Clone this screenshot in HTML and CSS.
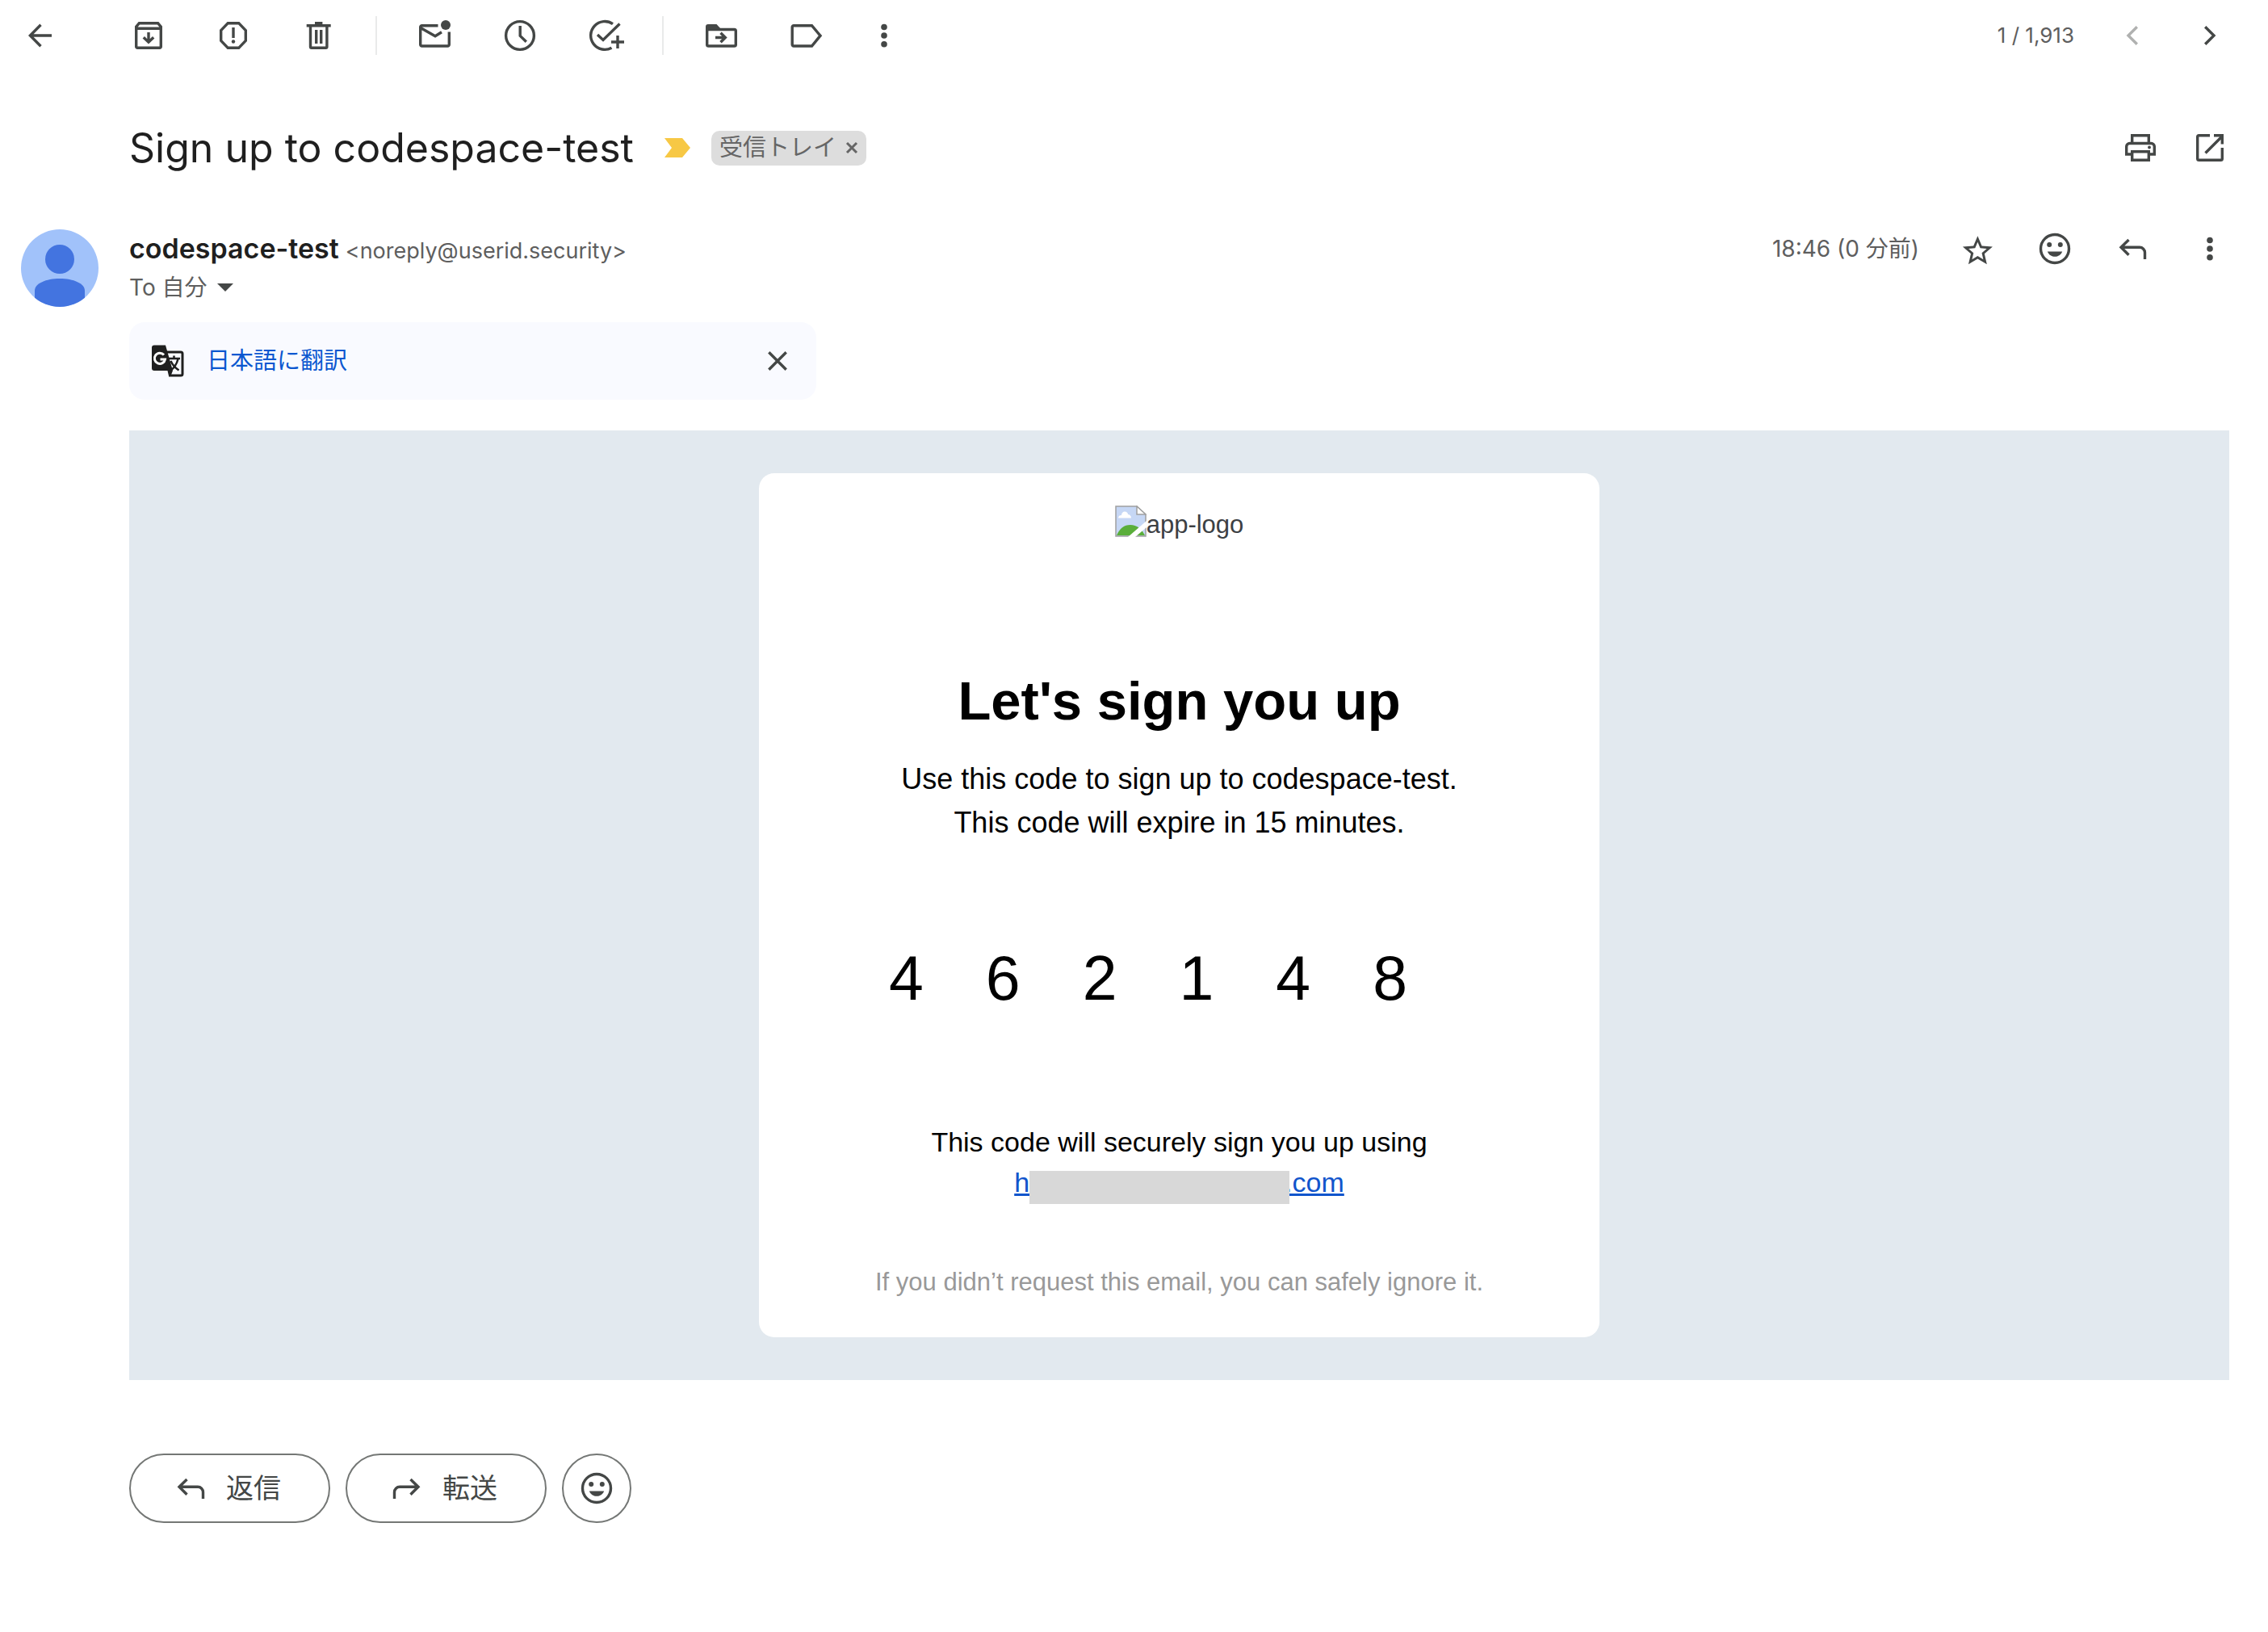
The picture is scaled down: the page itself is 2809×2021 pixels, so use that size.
FILE: index.html
```html
<!DOCTYPE html>
<html lang="ja">
<head>
<meta charset="utf-8">
<meta name="viewport" content="width=device-width, initial-scale=1">
<title>Sign up to codespace-test</title>
<link rel="stylesheet" href="styles.css">
</head>
<body>
<svg class="sprite" aria-hidden="true">
  <symbol id="i-back" viewBox="0 0 48 48"><path d="M38 24H12M24.5 10.8 11.4 24l13.1 13.2"/></symbol>
  <symbol id="i-archive" viewBox="0 0 48 48"><path d="M8.7 13.2 12.4 8.7h23.2l3.7 4.5v24.6a1.5 1.5 0 0 1-1.5 1.5H10.200a1.500 1.500 0 0 1-1.500-1.500zM8.700 15.300h30.600M24 20v12M17.800 26.200 24 32.200l6.200-6"/></symbol>
  <symbol id="i-spam" viewBox="0 0 48 48"><path d="M17.300 8.700h13.400l8.600 9v12.600l-8.600 9H17.300l-8.600-9V17.700zM24 14v13"/><circle class="fill" cx="24" cy="31.500" r="2.200"/></symbol>
  <symbol id="i-trash" viewBox="0 0 48 48"><path d="M9.700 11.700h30M20 8.700h9.400M14.500 12v26a1.300 1.300 0 0 0 1.300 1.300h17.800A1.300 1.300 0 0 0 34.900 38V12M21.700 17v17M27.700 17v17"/></symbol>
  <symbol id="i-unread" viewBox="0 0 48 48"><path d="M27.500 11.700H7.500a1.800 1.800 0 0 0-1.800 1.800v21.700A1.800 1.800 0 0 0 7.500 37h32a1.800 1.800 0 0 0 1.800-1.800V19.500M6 14.500l18 10.200 8-5"/><circle class="fill" cx="37" cy="11" r="6"/></symbol>
  <symbol id="i-clock" viewBox="0 0 48 48"><circle cx="24" cy="24" r="17.400"/><path d="M24.200 12v12.400l7.600 7.300"/></symbol>
  <symbol id="i-task" viewBox="0 0 48 48"><path d="M34 9.700A17.400 17.400 0 1 0 32.500 39.200M15 23l7 6.500L42.500 9.500M40 24v16M32 32h16"/></symbol>
  <symbol id="i-move" viewBox="0 0 48 48"><path d="M5.700 16.500h33.800a1.800 1.800 0 0 1 1.800 1.800v17A1.800 1.800 0 0 1 39.500 37h-32a1.800 1.800 0 0 1-1.800-1.700zM16 26.500h12M22.500 20.800l5.800 5.700-5.800 5.700"/><path class="fill" d="M4 17V13a3 3 0 0 1 3-3h10.500l5.500 6v1z"/></symbol>
  <symbol id="i-label" viewBox="0 0 48 48"><path d="M8 11.700h22.500L41 24.200 30.500 37H8a1.800 1.800 0 0 1-1.800-1.800V13.500A1.800 1.800 0 0 1 8 11.700z"/></symbol>
  <symbol id="i-more" viewBox="0 0 48 48"><circle class="fill" cx="24" cy="13.500" r="3.800"/><circle class="fill" cx="24" cy="24" r="3.800"/><circle class="fill" cx="24" cy="34.700" r="3.800"/></symbol>
  <symbol id="i-prev" viewBox="0 0 48 48"><path d="M29.800 13.200 19 24l10.800 10.800"/></symbol>
  <symbol id="i-next" viewBox="0 0 48 48"><path d="M18.200 13.200 29 24 18.200 34.800"/></symbol>
  <symbol id="i-print" viewBox="0 0 48 48"><path d="M13.700 18.500V8.700h20.600v9.800M13.700 32h-7V22.500a4 4 0 0 1 4-4h26.600a4 4 0 0 1 4 4V32h-7M13.700 28.700h20.600v10.600H13.700z"/><circle class="fill" cx="35" cy="23.500" r="1.900"/></symbol>
  <symbol id="i-open" viewBox="0 0 48 48"><path d="M24 8.700H10.500a1.800 1.800 0 0 0-1.800 1.800v27a1.800 1.800 0 0 0 1.800 1.800h27a1.800 1.800 0 0 0 1.800-1.800V24M29 8.700h10.300V19.500M18.500 30.500 39 10"/></symbol>
  <symbol id="i-star" viewBox="0 0 48 48"><path class="fill" transform="translate(2.200 4.500) scale(1.850)" d="M22 9.240l-7.190-.62L12 2 9.190 8.630 2 9.240l5.460 4.730L5.820 21 12 17.270 18.180 21l-1.630-7.030L22 9.240zM12 15.400l-3.760 2.270 1-4.280-3.320-2.880 4.380-.38L12 6.100l1.710 4.040 4.380.38-3.320 2.880 1 4.280L12 15.400z"/></symbol>
  <symbol id="i-smile" viewBox="0 0 48 48"><circle cx="24" cy="24" r="17.500"/><circle class="fill" cx="17.200" cy="19" r="3"/><circle class="fill" cx="30.800" cy="19" r="3"/><path class="fill" d="M14.800 27.500h18.400C31.500 31.500 28.200 33.800 24 33.800s-7.500-2.300-9.200-6.300z"/></symbol>
  <symbol id="i-reply" viewBox="0 0 48 48"><path d="M19.500 13 10 22.300l9.500 9.400M10.500 22.300H33a6.500 6.500 0 0 1 6.500 6.500V37"/></symbol>
  <symbol id="i-forward" viewBox="0 0 48 48"><path d="M28.500 13 38 22.300l-9.500 9.400M37.500 22.300H15a6.500 6.500 0 0 0-6.500 6.500V37"/></symbol>
  <symbol id="i-close" viewBox="0 0 48 48"><path d="M13.300 13.300l21.400 21.400M34.700 13.300 13.300 34.700"/></symbol>
</svg>

<header class="toolbar">
  <button class="icon-btn back" aria-label="戻る"><svg><use href="#i-back"/></svg></button>
  <div class="group">
    <button class="icon-btn" aria-label="アーカイブ"><svg><use href="#i-archive"/></svg></button>
    <button class="icon-btn" aria-label="迷惑メールを報告"><svg><use href="#i-spam"/></svg></button>
    <button class="icon-btn" aria-label="削除"><svg><use href="#i-trash"/></svg></button>
  </div>
  <div class="group">
    <button class="icon-btn" aria-label="未読にする"><svg><use href="#i-unread"/></svg></button>
    <button class="icon-btn" aria-label="スヌーズ"><svg><use href="#i-clock"/></svg></button>
    <button class="icon-btn" aria-label="ToDo リストに追加"><svg><use href="#i-task"/></svg></button>
  </div>
  <div class="group">
    <button class="icon-btn" aria-label="移動"><svg><use href="#i-move"/></svg></button>
    <button class="icon-btn" aria-label="ラベル"><svg><use href="#i-label"/></svg></button>
  </div>
  <button class="icon-btn overflow" aria-label="その他"><svg><use href="#i-more"/></svg></button>
  <div class="pager">
    <span class="count">1 / 1,913</span>
    <button class="icon-btn" aria-label="前へ" disabled><svg><use href="#i-prev"/></svg></button>
    <button class="icon-btn" aria-label="次へ"><svg><use href="#i-next"/></svg></button>
  </div>
</header>

<main>
  <div class="subject">
    <h1 class="subject-title">Sign up to codespace-test</h1>
    <svg class="important" viewBox="0 0 32 24" aria-hidden="true"><path d="M0 0h22l10 12-10 12H0l9-12z"/></svg>
    <span class="chip">受信トレイ<button class="chip-remove" aria-label="ラベルを削除"><svg viewBox="0 0 16 16"><path d="M2 2l12 12M14 2 2 14"/></svg></button></span>
    <div class="subject-actions">
      <button class="icon-btn" aria-label="印刷"><svg><use href="#i-print"/></svg></button>
      <button class="icon-btn" aria-label="新しいウィンドウで開く"><svg><use href="#i-open"/></svg></button>
    </div>
  </div>

  <article class="message">
    <svg class="avatar" viewBox="0 0 96 96" aria-hidden="true">
      <clipPath id="round"><circle cx="48" cy="48" r="48"/></clipPath>
      <g clip-path="url(#round)"><path fill="#a1c2fa" d="M0 0h96v96H0z"/><circle cx="48" cy="37" r="18" fill="#4374e0"/><path fill="#4374e0" d="M17 76c0-9 14-15 31-15s31 6 31 15v20H17z"/></g>
    </svg>
    <div class="content">
      <div class="meta">
        <div class="sender">
          <div class="from"><strong>codespace-test</strong><span>&lt;noreply@userid.security&gt;</span></div>
          <div class="to">To 自分 <svg class="caret" viewBox="0 0 20 10" aria-hidden="true"><path d="M0 0h20L10 10z"/></svg></div>
        </div>
        <div class="actions">
          <time class="time">18:46 (0 分前)</time>
          <button class="icon-btn" aria-label="スター"><svg><use href="#i-star"/></svg></button>
          <button class="icon-btn" aria-label="リアクション"><svg><use href="#i-smile"/></svg></button>
          <button class="icon-btn" aria-label="返信"><svg><use href="#i-reply"/></svg></button>
          <button class="icon-btn" aria-label="その他"><svg><use href="#i-more"/></svg></button>
        </div>
      </div>

      <div class="translate">
        <svg class="translate-icon" viewBox="0 0 48 48" aria-hidden="true">
          <path class="page" d="M22 13h18a2 2 0 0 1 2 2v25a2 2 0 0 1-2 2H25"/>
          <path class="tab" d="M7 4.500h14l9 31.500-2.500 6.500H25L23.500 36H7a3 3 0 0 1-3-3V7.500a3 3 0 0 1 3-3z"/>
          <path class="g" d="M19 16.500a6.600 6.600 0 1 0 1.500 5.500H14.500"/>
          <path class="ji" d="M24 21h15M31.500 17.500V21M36.500 21.500c-1.500 6-4.500 11-9.500 14.500M27.500 24c2 4.500 5.500 8.500 10 11.500"/>
        </svg>
        <a class="translate-link" href="#">日本語に翻訳</a>
        <button class="icon-btn" aria-label="閉じる"><svg><use href="#i-close"/></svg></button>
      </div>

      <div class="mail">
        <div class="card">
          <div class="logo">
            <svg class="broken" viewBox="0 0 39 39" aria-hidden="true">
              <path d="M1 1h26l11 10v27H1z" fill="#c6d7f5" stroke="#a0a0a0" stroke-width="1.500"/>
              <path d="M27 1v10h11z" fill="#fff" stroke="#a0a0a0" stroke-width="1.500"/>
              <path d="M4 15.500c0-2.500 2-3.500 4-3.500 0-3 2-4.500 4-4.500s4 1.500 4 3.500c2 0 4 1.500 4 4.500z" fill="#fff"/>
              <path d="M2 37c4-9 9-13 17-13 8 0 14 5 18 13z" fill="#5aae3b"/>
              <path d="M39 19v8L25 39h-9z" fill="#fff"/>
            </svg><span>app-logo</span>
          </div>
          <h2 class="headline">Let's sign you up</h2>
          <p class="lead">Use this code to sign up to codespace-test.<br>This code will expire in 15 minutes.</p>
          <div class="code"><span>4</span><span>6</span><span>2</span><span>1</span><span>4</span><span>8</span></div>
          <p class="using">This code will securely sign you up using<br><a href="#">h<span class="redacted"></span>.com</a></p>
          <p class="ignore">If you didn’t request this email, you can safely ignore it.</p>
        </div>
      </div>

      <div class="replies">
        <button class="pill"><svg><use href="#i-reply"/></svg>返信</button>
        <button class="pill"><svg><use href="#i-forward"/></svg>転送</button>
        <button class="pill round" aria-label="リアクション"><svg><use href="#i-smile"/></svg></button>
      </div>
    </div>
  </article>
</main>
</body>
</html>
```
FILE: styles.css
```css
* { box-sizing: border-box; }

body {
  margin: 0;
  background: #fff;
  color: #5e5e5e;
  font: 28px/48px Inter, "Noto Sans CJK JP", sans-serif;
}

h1, h2, p { margin: 0; }

button {
  padding: 0;
  border: 0;
  background: none;
  color: inherit;
  font: inherit;
}

svg { display: block; flex: none; }
.sprite { position: absolute; width: 0; height: 0; }

.icon-btn { flex: none; width: 48px; height: 48px; color: #444746; }
.icon-btn:disabled { color: #b0b1b0; }

.icon-btn svg, .pill svg {
  width: 48px;
  height: 48px;
  fill: none;
  stroke: currentColor;
  stroke-width: 3.4;
}
.fill { fill: currentColor; stroke: none; }

/* Toolbar */
.toolbar {
  display: flex;
  align-items: center;
  height: 88px;
  padding: 0 48px 0 26px;
}
.back { margin-right: 86px; }
.group { display: flex; gap: 57px; }
.group + .group {
  margin-left: 47px;
  padding-left: 48px;
  border-left: 2px solid #e9eaea;
}
.overflow { margin-left: 48px; }
.pager { display: flex; align-items: center; gap: 48px; margin-left: auto; }
.count { font-size: 26px; }

/* Subject */
.subject {
  display: flex;
  align-items: center;
  min-height: 96px;
  margin: 47px 0 53px;
  padding: 0 48px 0 160px;
}
.subject-title { color: #1f1f1f; font-size: 50px; font-weight: 400; line-height: 64px; }
.important { width: 32px; height: 24px; margin: 0 26px 0 38px; fill: #f7c845; }
.chip {
  display: flex;
  align-items: center;
  gap: 11px;
  height: 43px;
  padding: 0 10px;
  border-radius: 10px;
  background: #ddd;
  color: #666;
  font-size: 29px;
}
.chip-remove svg { width: 16px; height: 16px; fill: none; stroke: #666; stroke-width: 3; }
.subject-actions { display: flex; gap: 38px; margin-left: auto; }

/* Message */
.message { display: flex; padding: 0 48px 0 26px; }
.avatar { width: 96px; height: 96px; margin-right: 38px; }
.content { flex: 1; min-width: 0; }
.meta { display: flex; justify-content: space-between; }
.from { display: flex; align-items: baseline; gap: 8px; height: 48px; font-size: 27px; }
.from strong { color: #1f1f1f; font-size: 34px; font-weight: 600; }
.to { display: flex; align-items: center; gap: 12px; height: 48px; }
.caret { width: 20px; height: 10px; fill: #444746; }
.actions { display: flex; gap: 48px; height: 48px; }

.translate {
  display: flex;
  align-items: center;
  max-width: 851px;
  height: 96px;
  margin: 19px 0 38px;
  padding: 0 24px;
  border-radius: 19px;
  background: #f9faff;
}
.translate-icon { width: 48px; height: 48px; margin-right: 24px; fill: none; stroke: #1f1f1f; }
.translate-icon .page { stroke-width: 3; }
.translate-icon .tab { fill: #1f1f1f; stroke: none; }
.translate-icon .g { stroke: #fff; stroke-width: 3; }
.translate-icon .ji { stroke-width: 2.5; }
.translate-link { margin-right: auto; color: #0b57d0; font-size: 29px; text-decoration: none; }

/* Mail body */
.mail {
  padding: 53px 24px;
  background: #e2e9ef;
  font-family: "Liberation Sans", Arial, sans-serif;
}
.card {
  max-width: 1041px;
  margin: 0 auto;
  padding: 40px 24px 45px;
  border-radius: 19px;
  background: #fff;
  color: #000;
  text-align: center;
}
.logo {
  display: flex;
  align-items: flex-end;
  justify-content: center;
  color: #3c4043;
  font-size: 31px;
  line-height: 31px;
}
.broken { width: 39px; height: 39px; }
.headline { margin-top: 163px; font-size: 67px; line-height: 80px; }
.lead { margin-top: 30px; font-size: 36px; line-height: 54px; }
.code {
  display: flex;
  justify-content: center;
  gap: 77px;
  margin-top: 117px;
  padding-right: 77px;
  font-size: 77px;
  line-height: 96px;
}
.using { margin-top: 130px; font-size: 34px; line-height: 50px; }
.using a { color: #1155cc; }
.redacted {
  position: relative;
  display: inline-block;
  width: 322px;
  height: 41px;
  margin: 0 -6px -4px 0;
  background: #d8d8d8;
  vertical-align: -11px;
}
.ignore { margin-top: 76px; color: #999; font-size: 31px; line-height: 46px; }

/* Reply buttons */
.replies { display: flex; gap: 19px; margin-top: 91px; }
.pill {
  display: flex;
  align-items: center;
  gap: 20px;
  height: 86px;
  padding: 0 59px 0 50px;
  border: 2px solid #747775;
  border-radius: 43px;
  color: #444746;
  font-size: 34px;
}
.round { padding: 0 17px; }
```
